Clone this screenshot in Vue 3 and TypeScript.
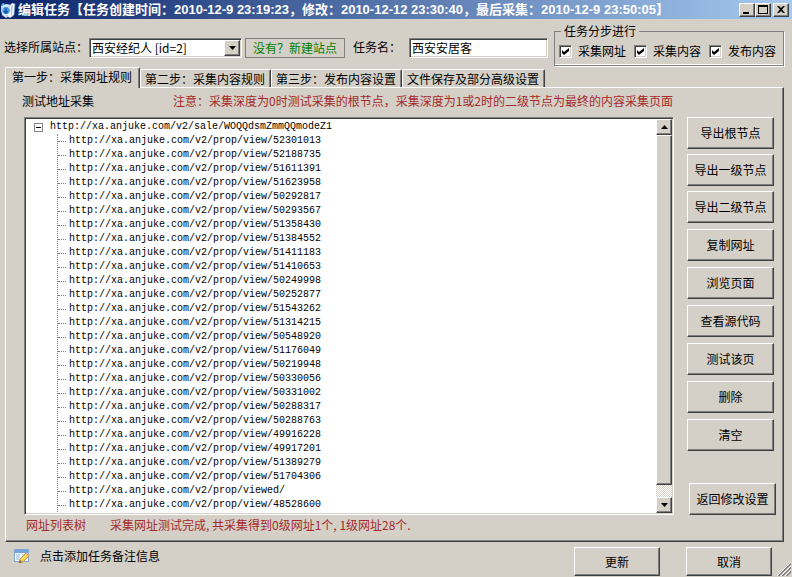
<script setup lang="ts">
import { ref } from 'vue'

interface Step {
  id: string
  label: string
  checked: boolean
}

const site = ref('西安经纪人 [id=2]')
const taskName = ref('西安安居客')

const steps = ref<Step[]>([
  { id: 'step-url', label: '采集网址', checked: true },
  { id: 'step-content', label: '采集内容', checked: true },
  { id: 'step-publish', label: '发布内容', checked: true },
])

const tabs: string[] = [
  '第一步：采集网址规则',
  '第二步：采集内容规则',
  '第三步：发布内容设置',
  '文件保存及部分高级设置',
]
const activeTab = ref(0)

const expanded = ref(true)
const rootUrl = 'http://xa.anjuke.com/v2/sale/WOQQdsmZmmQQmodeZ1'
const pages: string[] = [
  'view/52301013', 'view/52188735', 'view/51611391', 'view/51623958', 'view/50292817',
  'view/50293567', 'view/51358430', 'view/51384552', 'view/51411183', 'view/51410653',
  'view/50249998', 'view/50252877', 'view/51543262', 'view/51314215', 'view/50548920',
  'view/51176049', 'view/50219948', 'view/50330056', 'view/50331002', 'view/50288317',
  'view/50288763', 'view/49916228', 'view/49917201', 'view/51389279', 'view/51704306',
  'viewed/', 'view/48528600',
]

const exportActions: string[] = ['导出根节点', '导出一级节点', '导出二级节点']
const pageActions: string[] = ['复制网址', '浏览页面', '查看源代码', '测试该页', '删除', '清空']
</script>

<template>
  <div class="window">
    <header class="titlebar">
      <svg class="app-icon" width="16" height="16" viewBox="0 0 16 16" aria-hidden="true">
        <path d="M1 4l5-2 6 1-1 10-5 3-4-3z" fill="#cfe6fa" />
        <path d="M9 5l3-4 3 1-1 11-4 3-3-2z" fill="#f4f8fc" stroke="#7f9fc8" stroke-width=".6" />
        <path d="M11 4l2-1-1 10-1 1z" fill="#b9c8dc" />
        <circle cx="6" cy="8.500" r="4.300" fill="#4a9be8" stroke="#e8f4ff" />
        <path d="M6 6v4M4 9l2 2 2-2" fill="none" stroke="#1c4fae" stroke-width="1.400" />
        <path d="M1 3l2-2 2 1-2 2z" fill="#5fb0f4" />
      </svg>
      <h1>编辑任务【任务创建时间：2010-12-9 23:19:23，修改：2010-12-12 23:30:40，最后采集：2010-12-9 23:50:05】</h1>
      <div class="caption-buttons">
        <button class="raised caption" type="button" aria-label="最小化">
          <svg width="12" height="10" viewBox="0 0 12 10"><path d="M2 7h6v2H2z" /></svg>
        </button>
        <button class="raised caption" type="button" aria-label="最大化">
          <svg width="12" height="10" viewBox="0 0 12 10"><path d="M1 0h10v9H1zM2 2v6h8V2z" fill-rule="evenodd" /></svg>
        </button>
        <button class="raised caption close" type="button" aria-label="关闭">
          <svg width="12" height="10" viewBox="0 0 12 10"><path d="M2 1h2l2 2 2-2h2L7 4.500 10 8H8L6 6 4 8H2l3-3.500z" /></svg>
        </button>
      </div>
    </header>

    <div class="toolbar">
      <label for="site">选择所属站点：</label>
      <div class="combo sunken">
        <select id="site" v-model="site">
          <option>西安经纪人 [id=2]</option>
        </select>
        <span class="raised combo-arrow">
          <svg width="7" height="4" viewBox="0 0 7 4"><path d="M0 0h7L3.500 4z" /></svg>
        </span>
      </div>
      <button class="new-site" type="button">没有？新建站点</button>
      <label class="name-label" for="task">任务名：</label>
      <input id="task" v-model="taskName" class="task sunken" type="text" />
      <fieldset class="steps">
        <legend>任务分步进行</legend>
        <label v-for="step in steps" :key="step.id" class="step" :for="step.id">
          <span class="check">
            <input :id="step.id" v-model="step.checked" class="sunken" type="checkbox" />
            <svg v-if="step.checked" width="7" height="7" viewBox="0 0 7 7"><path d="M0 2l2 2 5-4v3L2 7 0 5z" /></svg>
          </span>
          {{ step.label }}
        </label>
      </fieldset>
    </div>

    <nav class="tabs" role="tablist">
      <button
        v-for="(tab, index) in tabs"
        :key="tab"
        class="tab"
        :class="{ active: index === activeTab }"
        type="button"
        role="tab"
        :aria-selected="index === activeTab"
        @click="activeTab = index"
      >{{ tab }}</button>
    </nav>

    <main class="panel">
      <div class="heading">
        <h2>测试地址采集</h2>
        <p class="warning">注意：采集深度为0时测试采集的根节点，采集深度为1或2时的二级节点为最终的内容采集页面</p>
      </div>
      <div class="content">
        <div class="tree-box sunken">
          <div class="tree">
            <div class="root">
              <button class="toggle" type="button" aria-label="折叠" @click="expanded = !expanded">
                <svg width="9" height="9" viewBox="0 0 9 9" shape-rendering="crispEdges">
                  <path d="M0 0h9v9H0z" fill="#848484" /><path d="M1 1h7v7H1z" fill="#fff" />
                  <path d="M2 4h5v1H2z" fill="#000" />
                  <path v-if="!expanded" d="M4 2h1v5H4z" fill="#000" />
                </svg>
              </button>
              <span>{{ rootUrl }}</span>
            </div>
            <ul v-if="expanded">
              <li v-for="page in pages" :key="page">http://xa.anjuke.com/v2/prop/{{ page }}</li>
            </ul>
          </div>
          <div class="scrollbar">
            <button class="raised scroll-button" type="button" aria-label="向上滚动">
              <svg width="7" height="4" viewBox="0 0 7 4"><path d="M3.500 0L7 4H0z" /></svg>
            </button>
            <div class="raised thumb"></div>
            <div class="track"></div>
            <button class="raised scroll-button" type="button" aria-label="向下滚动">
              <svg width="7" height="4" viewBox="0 0 7 4"><path d="M0 0h7L3.500 4z" /></svg>
            </button>
          </div>
        </div>
        <aside class="actions">
          <div class="group export">
            <button v-for="action in exportActions" :key="action" class="raised action" type="button">{{ action }}</button>
          </div>
          <div class="group">
            <button v-for="action in pageActions" :key="action" class="raised action" type="button">{{ action }}</button>
          </div>
          <button class="raised action back" type="button">返回修改设置</button>
        </aside>
      </div>
      <div class="status">
        <span>网址列表树</span>
        <span>采集网址测试完成, 共采集得到0级网址1个, 1级网址28个.</span>
      </div>
    </main>

    <footer class="footer">
      <a class="note" href="#">
        <svg width="16" height="16" viewBox="0 0 16 16" aria-hidden="true">
          <path d="M.5 1.500h14v12H.5z" fill="#f7fbff" stroke="#7fa6d6" />
          <path d="M1 2h13v3H1z" fill="#6fa3e0" />
          <path d="M2 7h4M2 9h4M2 11h3M8 7h5" stroke="#8fb0d8" />
          <path d="M5 15l1-4 6-6 3 3-6 6z" fill="#f6cf52" stroke="#b98a2c" stroke-width=".8" />
          <path d="M7 12l6-6" stroke="#fff0a8" />
          <path d="M5 15l1-3 2 2z" fill="#7a5a34" />
          <path d="M11.500 5.500l1-1 3 3-1 1z" fill="#e8a46c" />
        </svg>
        <span>点击添加任务备注信息</span>
      </a>
      <button class="raised dialog" type="button">更新</button>
      <button class="raised dialog" type="button">取消</button>
      <svg class="grip" width="14" height="14" viewBox="0 0 14 14" aria-hidden="true">
        <path d="M0 14L14 0M4 14L14 4M8 14l6-6" stroke="#fff" />
        <path d="M1 14L14 1M2 14L14 2M5 14l9-9M6 14l8-8M9 14l5-5M10 14l4-4" stroke="#848284" />
      </svg>
    </footer>
  </div>
</template>

<style>
body {
  margin: 0;
  background: #d4d0c8;
}
</style>

<style scoped>
.window {
  display: flex;
  flex-direction: column;
  box-sizing: border-box;
  min-height: 100vh;
  background: #d4d0c8;
  color: #000;
  font: 12px/16px "Noto Sans CJK SC", sans-serif;
}
.window *,
.window *::before {
  box-sizing: border-box;
}
button,
input,
select {
  margin: 0;
  padding: 0;
  border-radius: 0;
  color: inherit;
  font: inherit;
}
h1,
h2,
p,
ul {
  margin: 0;
  padding: 0;
  font-size: 12px;
  font-weight: 400;
}
label,
button {
  white-space: nowrap;
}
svg {
  display: block;
}
.raised {
  display: flex;
  align-items: center;
  justify-content: center;
  border: 1px solid;
  border-color: #fff #404040 #404040 #fff;
  background: #d4d0c8;
  box-shadow: inset -1px -1px #808080;
}
.sunken {
  border: 1px solid;
  border-color: #808080 #fff #fff #808080;
  background: #fff;
  box-shadow: inset 1px 1px #404040, inset -1px -1px #d4d0c8;
}

.titlebar {
  display: flex;
  align-items: center;
  height: 19px;
  padding: 0 3px 0 0;
  background: linear-gradient(90deg, #0a246a, #a6caf0);
}
.app-icon {
  flex: none;
}
h1 {
  flex: 1;
  min-width: 0;
  padding-left: 2px;
  overflow: hidden;
  color: #fff;
  font: bold 13px/18px "Liberation Sans", "Noto Sans CJK SC", sans-serif;
  white-space: nowrap;
}
.caption-buttons {
  display: flex;
}
.caption {
  width: 16px;
  height: 14px;
}
.close {
  margin-left: 2px;
}

.toolbar {
  display: flex;
  align-items: flex-start;
  padding: 4px 8px 0 4px;
}
.toolbar > label,
.combo,
.new-site,
.task {
  height: 20px;
  margin-top: 15px;
  line-height: 18px;
}
.combo {
  position: relative;
  flex: none;
  width: 153px;
  margin-left: 1px;
}
.combo select {
  width: 100%;
  height: 18px;
  padding: 0 20px 0 2px;
  border: 0;
  background: transparent;
  appearance: none;
}
.combo-arrow {
  position: absolute;
  top: 1px;
  right: 1px;
  width: 16px;
  height: 16px;
  pointer-events: none;
}
.new-site {
  width: 100px;
  margin-left: 3px;
  border: 1px solid #808080;
  background: transparent;
  color: #008000;
}
.name-label {
  width: 56px;
  margin-left: 8px;
}
.task {
  flex: 1;
  min-width: 80px;
  padding: 0 2px 2px;
}
.steps {
  display: flex;
  flex: none;
  gap: 8px;
  width: 230px;
  height: 43px;
  margin: 0 0 0 6px;
  padding: 0 7px 0 4px;
  border: 1px solid #808080;
  box-shadow: 1px 1px #fff, inset 0 -1px #fff;
}
legend {
  margin-left: 2px;
  padding: 0 3px;
}
.step {
  display: flex;
  flex: 1;
  align-items: center;
  gap: 6px;
  height: 24px;
}
.check {
  display: grid;
  place-items: center;
}
.check > * {
  grid-area: 1 / 1;
}
.check input {
  width: 13px;
  height: 13px;
  appearance: none;
}
.check svg {
  z-index: 1;
  pointer-events: none;
}

.tabs {
  display: flex;
  align-items: flex-end;
  margin: 1px 0 0 5px;
}
.tab {
  height: 18px;
  padding: 0 5px 0 4px;
  border: 1px solid;
  border-color: #fff #404040 transparent #fff;
  border-bottom: 0;
  border-radius: 2px 2px 0 0;
  background: #d4d0c8;
  box-shadow: inset -1px 0 #808080;
}
.tab.active {
  z-index: 1;
  height: 21px;
  margin-bottom: -1px;
  padding: 0 7px 2px 6px;
}
.panel {
  display: flex;
  flex: 1;
  flex-direction: column;
  margin: 0 8px 0 5px;
  padding: 5px 7px 8px 18px;
  border: 1px solid;
  border-color: #fff #404040 #404040 #fff;
  box-shadow: inset -1px -1px #808080;
}
.heading {
  display: flex;
  gap: 79px;
  margin: 0 0 8px -2px;
}
.heading h2 {
  flex: none;
}
.warning,
.status {
  color: #a52a2a;
}
.warning {
  white-space: nowrap;
}
.content {
  display: flex;
  flex: 1;
  gap: 13px;
}
.tree-box {
  display: flex;
  flex: 1;
  min-width: 0;
  padding: 1px;
}
.tree {
  flex: 1;
  min-width: 0;
  padding: 1px 0 0 8px;
  overflow: hidden;
  font: 10px/14px "Liberation Mono", monospace;
  white-space: nowrap;
}
.root {
  display: flex;
  align-items: center;
  gap: 7px;
  height: 14px;
}
.toggle {
  border: 0;
  background: none;
}
.tree ul {
  margin-left: 23px;
  border-left: 1px dotted #808080;
  font-size: 10px;
  list-style: none;
}
.tree li {
  display: flex;
  align-items: center;
  gap: 3px;
  height: 14px;
}
.tree li::before {
  width: 8px;
  border-top: 1px dotted #808080;
  content: "";
}
.scrollbar {
  display: flex;
  flex-direction: column;
  width: 16px;
}
.scroll-button {
  flex: none;
  height: 16px;
}
.thumb {
  flex: 1;
}
.track {
  height: 12px;
  background: repeating-conic-gradient(#fff 0 25%, #d4d0c8 0 50%) 0 0 / 2px 2px;
}
.actions {
  display: flex;
  flex: none;
  flex-direction: column;
  width: 89px;
}
.group {
  display: flex;
  flex-direction: column;
  gap: 6px;
}
.export {
  gap: 5px;
  margin-bottom: 6px;
}
.action {
  width: 87px;
  height: 32px;
}
.back {
  align-self: flex-end;
  margin-top: auto;
}
.status {
  display: flex;
  gap: 24px;
  margin-top: 2px;
  padding-left: 2px;
}

.footer {
  display: flex;
  align-items: flex-start;
  padding: 5px 1px 1px 14px;
}
.note {
  display: flex;
  flex: 1;
  gap: 10px;
  margin-top: 1px;
  color: inherit;
  text-decoration: none;
}
.dialog {
  width: 86px;
  height: 29px;
  margin-right: 26px;
}
.dialog + .dialog {
  margin-right: 5px;
}
.grip {
  align-self: flex-end;
}
</style>
